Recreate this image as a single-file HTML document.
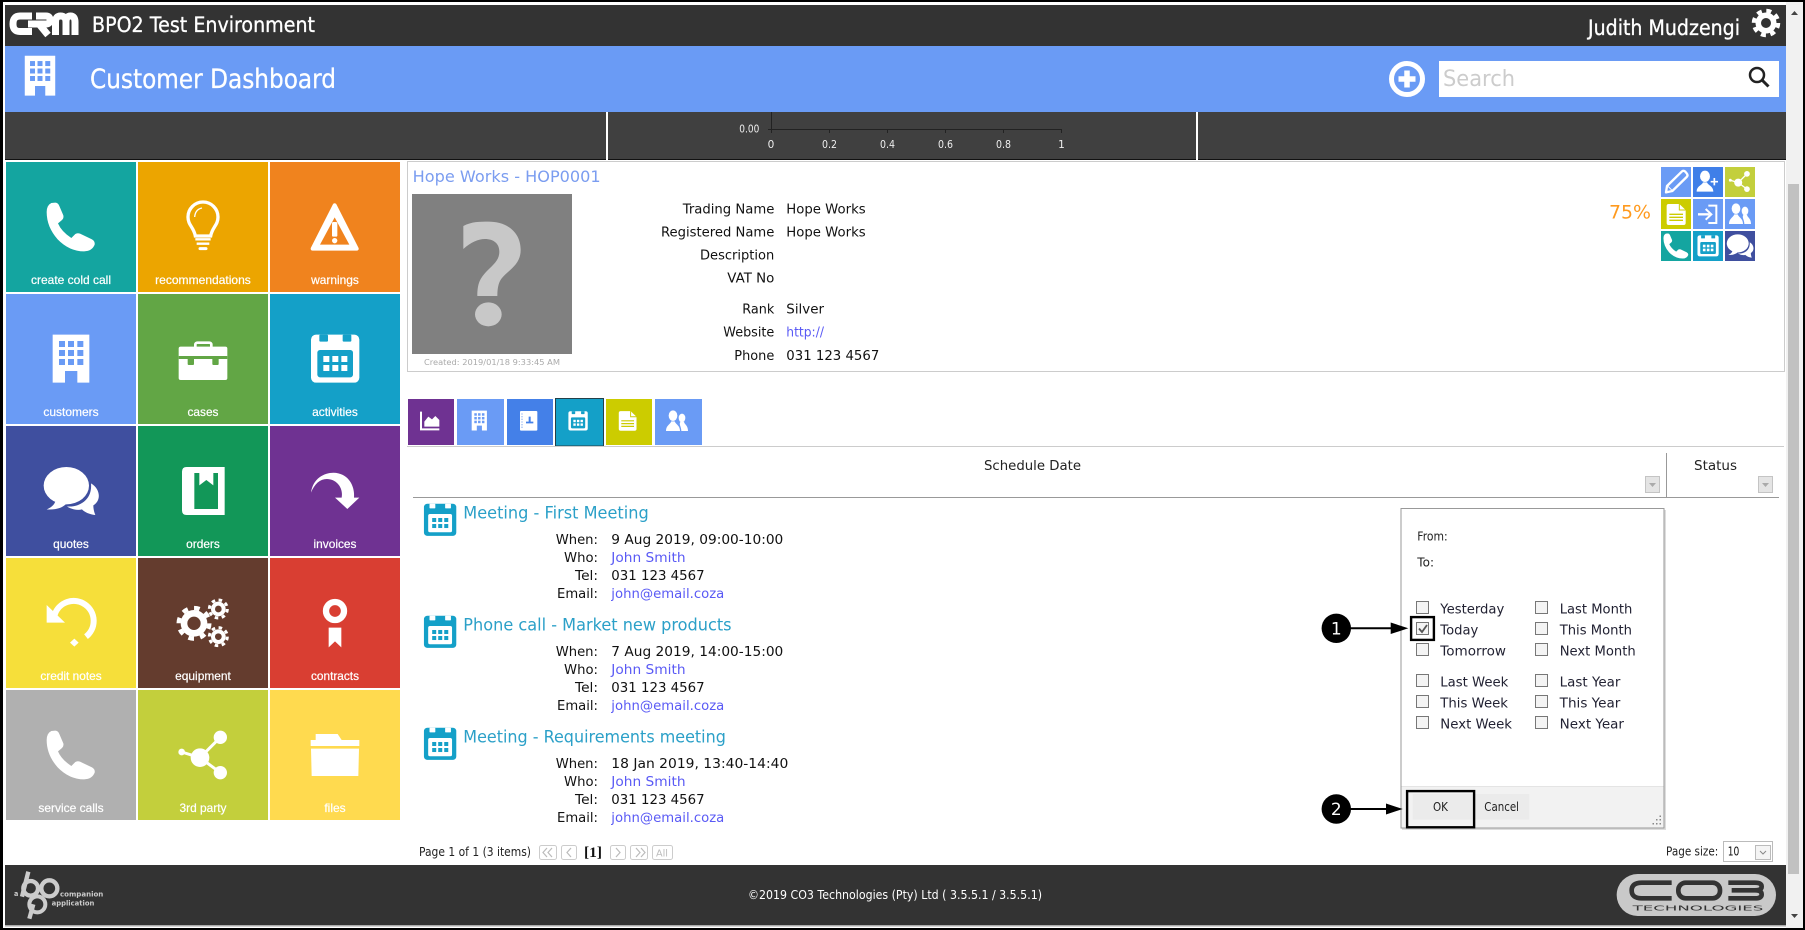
<!DOCTYPE html>
<html>
<head>
<meta charset="utf-8">
<title>Customer Dashboard</title>
<style>
html,body{margin:0;padding:0;background:#fff;width:1805px;height:930px;overflow:hidden}
svg{display:block}
text{font-family:"DejaVu Sans","Liberation Sans",sans-serif}
.a{font-family:"Liberation Sans",sans-serif;font-size:12px;fill:#fff;text-anchor:middle;stroke:#fff;stroke-width:.2}
.l{font-size:13.3px;fill:#111}
.k{font-size:13.3px;fill:#5a5af5}
.h{font-size:16.5px;fill:#2ba0c8}
.p{font-size:13.3px;fill:#223}
.s{font-size:12px;fill:#222}
.b{stroke:#fff;stroke-width:.3}
</style>
</head>
<body>
<svg xmlns="http://www.w3.org/2000/svg" width="1805" height="930" viewBox="0 0 1805 930">
<defs>
<symbol id="phone" viewBox="0 0 390 390"><path fill="#fff" d="M136 123L148 122Q156 122 160 132L172 160Q174 168 168 174L156 184Q166 208 196 228L208 216Q214 212 222 215L258 232Q268 238 266 248Q258 268 234 268Q190 268 155 232Q122 195 122 150Q122 130 136 123Z"/></symbol>
<symbol id="bulb" viewBox="0 0 390 390"><path fill="none" stroke="#fff" stroke-width="10" d="M172 222C167 195 150 190 150 165A45 45 0 0 1 240 165C240 190 223 195 218 222Z"/><path fill="none" stroke="#fff" stroke-width="4" d="M170 165Q172 142 192 138"/><path stroke="#fff" stroke-width="7" d="M172 232H218M176 245H214"/><path stroke="#fff" stroke-width="9" stroke-linecap="round" d="M186 260H204"/></symbol>
<symbol id="warn" viewBox="0 0 390 390"><path fill="#fff" stroke="#fff" stroke-width="12" stroke-linejoin="round" d="M194 130L260 260H128Z"/><path fill="currentColor" d="M194 166L238 248H150Z"/><rect x="186" y="180" width="16" height="44" rx="4" fill="#fff"/><circle cx="194" cy="236" r="8" fill="#fff"/></symbol>
<symbol id="bldg" viewBox="0 0 390 390"><path fill="#fff" d="M140 122H250V266H214V231H177V266H140Z"/><g fill="currentColor"><rect x="159" y="141" width="18" height="18"/><rect x="186" y="141" width="18" height="18"/><rect x="214" y="141" width="18" height="18"/><rect x="159" y="168" width="18" height="18"/><rect x="186" y="168" width="18" height="18"/><rect x="214" y="168" width="18" height="18"/><rect x="159" y="195" width="18" height="18"/><rect x="186" y="195" width="18" height="18"/><rect x="214" y="195" width="18" height="18"/></g></symbol>
<symbol id="case" viewBox="0 0 390 390"><rect x="122" y="158" width="146" height="100" rx="6" fill="#fff"/><rect x="172" y="146" width="48" height="20" rx="6" fill="none" stroke="#fff" stroke-width="8"/><rect x="122" y="186" width="146" height="9" fill="currentColor"/><rect x="149" y="186" width="19" height="27" rx="3" fill="currentColor"/><rect x="223" y="186" width="19" height="27" rx="3" fill="currentColor"/></symbol>
<symbol id="cal" viewBox="0 0 390 390"><rect x="123" y="122" width="145" height="144" rx="15" style="fill:var(--f,#fff)"/><rect x="148" y="122" width="26" height="21" rx="3" fill="currentColor"/><rect x="218" y="122" width="26" height="21" rx="3" fill="currentColor"/><rect x="142" y="168" width="107" height="82" rx="8" fill="currentColor"/><g style="fill:var(--f,#fff)"><rect x="160" y="186" width="18" height="18"/><rect x="187" y="186" width="18" height="18"/><rect x="214" y="186" width="18" height="18"/><rect x="160" y="213" width="18" height="18"/><rect x="187" y="213" width="18" height="18"/><rect x="214" y="213" width="18" height="18"/></g></symbol>
<symbol id="bubble" viewBox="0 0 390 390"><path fill="#fff" d="M255 172C285 190 285 225 262 238C262 250 265 260 268 267C250 265 235 258 228 250C215 254 195 250 183 241C215 245 260 225 255 172Z"/><ellipse cx="181" cy="179" rx="68" ry="56" fill="#fff"/><path fill="#fff" d="M150 215C150 235 135 245 122 250C150 252 170 245 180 234Z"/></symbol>
<symbol id="book" viewBox="0 0 390 390"><path fill="#fff" d="M146 123H260V267H146Q132 267 132 253V137Q132 123 146 123Z"/><path fill="currentColor" d="M169 141H184V178L205 162L226 178V141H240V249H169Z"/></symbol>
<symbol id="inv" viewBox="0 0 390 390"><path fill="#fff" d="M123 200C130 150 175 135 205 142C240 150 255 185 252 215H268L232 249L195 215H215C220 190 205 165 180 160C155 155 135 170 123 200Z"/></symbol>
<symbol id="credit" viewBox="0 0 390 390"><path fill="none" stroke="#fff" stroke-width="18" d="M146 170A60 60 0 1 1 240 236"/><path fill="#fff" d="M122 141V194H177Z"/><path fill="#fff" d="M205 242L218 254L205 266L192 254Z"/></symbol>
<symbol id="gears" viewBox="0 0 390 390"><circle cx="168" cy="196" r="40" fill="#fff"/><circle cx="168" cy="196" r="46" fill="none" stroke="#fff" stroke-width="13" stroke-dasharray="17 19.1"/><circle cx="168" cy="196" r="20" fill="currentColor"/><circle cx="241" cy="153" r="22" fill="#fff"/><circle cx="241" cy="153" r="27" fill="none" stroke="#fff" stroke-width="9" stroke-dasharray="10.6 10.6"/><circle cx="241" cy="153" r="10" fill="currentColor"/><circle cx="241" cy="236" r="22" fill="#fff"/><circle cx="241" cy="236" r="27" fill="none" stroke="#fff" stroke-width="9" stroke-dasharray="10.6 10.6"/><circle cx="241" cy="236" r="10" fill="currentColor"/></symbol>
<symbol id="rib" viewBox="0 0 390 390"><circle cx="195" cy="159" r="27" fill="none" stroke="#fff" stroke-width="19"/><path fill="#fff" d="M176 209H214V268L195 250L176 268Z"/></symbol>
<symbol id="share" viewBox="0 0 390 390"><path fill="none" stroke="#fff" stroke-width="9" d="M131 186L186 203L247 142M186 203L247 248"/><circle cx="186" cy="203" r="28" fill="#fff"/><circle cx="247" cy="142" r="20" fill="#fff"/><circle cx="247" cy="248" r="20" fill="#fff"/><circle cx="131" cy="186" r="10" fill="#fff"/></symbol>
<symbol id="folder" viewBox="0 0 390 390"><path fill="#fff" d="M137 132H203L215 150H268V168H122V150H137Z"/><path fill="#fff" d="M123 176H267L265 258H125Z"/></symbol>
<symbol id="pencil" viewBox="0 0 90 90"><path fill="none" stroke="#fff" stroke-width="7" stroke-linejoin="round" d="M15 76L18 57L62 14Q67 9 73 14L77 19Q82 25 77 30L34 72Z"/><path stroke="#fff" stroke-width="3" d="M21 58L33 70"/></symbol>
<symbol id="uplus" viewBox="0 0 90 90"><ellipse cx="36" cy="28" rx="15" ry="17" fill="#fff"/><path fill="#fff" d="M11 74C11 57 27 55 30 46H42C45 55 61 57 61 74Z"/><path stroke="#fff" stroke-width="5" d="M64 33V55M53 44H75"/></symbol>
<symbol id="doc" viewBox="0 0 90 90"><path fill="#fff" d="M23 15H55L74 33V72Q74 78 68 78H23Q17 78 17 72V21Q17 15 23 15Z"/><path fill="none" stroke="currentColor" stroke-width="3" d="M55 15V33H74"/><path stroke="currentColor" stroke-width="4" d="M25 46H66M25 55H66M25 64H66"/></symbol>
<symbol id="login" viewBox="0 0 90 90"><path fill="none" stroke="#fff" stroke-width="6" d="M46 20H70V72H46"/><path stroke="#fff" stroke-width="7" d="M15 46H50"/><path fill="none" stroke="#fff" stroke-width="6" d="M38 30L55 46L38 62"/></symbol>
<symbol id="users" viewBox="0 0 90 90"><ellipse cx="33" cy="29" rx="13" ry="16" fill="#fff"/><path fill="#fff" d="M12 75C12 58 24 56 28 46H38C42 56 54 58 54 75Z"/><ellipse cx="60" cy="36" rx="10" ry="13" fill="#fff"/><path fill="#fff" d="M58 75C58 62 50 55 55 48H66C68 56 78 58 78 75Z"/></symbol>
</defs>

<!-- frame -->
<rect width="1805" height="930" fill="#000"/>
<rect x="3" y="2" width="1800" height="926" fill="#fff"/>

<!-- header -->
<rect x="5" y="5" width="1781" height="41" fill="#333"/>
<g fill="none" stroke="#fff" stroke-width="7">
<path d="M32 16H20Q13 16 13 24Q13 31.500 20 31.500H32"/>
<path d="M28 24H46Q50 24 50 20Q50 16 46 16H36"/>
<path d="M39 24L48 35"/>
<path d="M55.500 35V22Q55.500 16 60.500 16Q66 16 66 22V35M66 22Q66 16 70.500 16Q75 16 75 22V35"/>
</g>
<text class="b" x="92" y="32" font-size="21" fill="#fff" textLength="223" lengthAdjust="spacingAndGlyphs">BPO2 Test Environment</text>
<text class="b" x="1588" y="35" font-size="21" fill="#fff" textLength="152" lengthAdjust="spacingAndGlyphs">Judith Mudzengi</text>
<circle cx="1766" cy="23" r="10.500" fill="#fff"/>
<circle cx="1766" cy="23" r="12" fill="none" stroke="#fff" stroke-width="4.500" stroke-dasharray="4.900 4.520"/>
<circle cx="1766" cy="23" r="5" fill="#333"/>

<!-- blue bar -->
<rect x="5" y="46" width="1781" height="66" fill="#6a9bf5"/>
<use href="#bldg" x="-14" y="22" width="108" height="108" color="#6a9bf5"/>
<text class="b" x="90" y="88" font-size="27" fill="#fff" textLength="246" lengthAdjust="spacingAndGlyphs">Customer Dashboard</text>
<circle cx="1407" cy="79" r="15.500" fill="none" stroke="#fff" stroke-width="5"/>
<path d="M1407 70.500V87.500M1398.500 79H1415.500" stroke="#fff" stroke-width="5.500"/>
<rect x="1439" y="61" width="340" height="36" fill="#fff"/>
<text x="1443" y="86" font-size="22" fill="#ccc" textLength="72" lengthAdjust="spacingAndGlyphs">Search</text>
<circle cx="1757" cy="75" r="7" fill="none" stroke="#222" stroke-width="2.500"/>
<path d="M1762 80L1768.500 86.500" stroke="#222" stroke-width="3"/>

<!-- chart strip -->
<rect x="5" y="112" width="1781" height="47" fill="#404040"/>
<rect x="5" y="159" width="1781" height="1" fill="#111"/>
<rect x="606" y="112" width="2" height="48" fill="#fff"/>
<rect x="1196" y="112" width="2" height="48" fill="#fff"/>
<path d="M771.500 112V133M768 129.500H1062M829.500 129.500V133M887.500 129.500V133M945.500 129.500V133M1003.500 129.500V133M1061.500 129.500V133" stroke="#222" fill="none"/>
<g font-size="10.500" fill="#eee" text-anchor="middle">
<text x="749.300" y="132.700" textLength="20" lengthAdjust="spacingAndGlyphs">0.00</text>
<text x="771" y="148">0</text><text x="829.500" y="148" textLength="15" lengthAdjust="spacingAndGlyphs">0.2</text><text x="887.500" y="148" textLength="15" lengthAdjust="spacingAndGlyphs">0.4</text><text x="945.500" y="148" textLength="15" lengthAdjust="spacingAndGlyphs">0.6</text><text x="1003.500" y="148" textLength="15" lengthAdjust="spacingAndGlyphs">0.8</text><text x="1061.500" y="148">1</text>
</g>

<!-- tiles -->
<rect x="6" y="162" width="130" height="130" fill="#14a5a0"/><use href="#phone" x="6" y="162" width="130" height="130"/>
<rect x="138" y="162" width="130" height="130" fill="#eca500"/><use href="#bulb" x="138" y="162" width="130" height="130"/>
<rect x="270" y="162" width="130" height="130" fill="#f0831e"/><use href="#warn" x="270" y="162" width="130" height="130" color="#f0831e"/>
<rect x="6" y="294" width="130" height="130" fill="#6a9bf5"/><use href="#bldg" x="6" y="294" width="130" height="130" color="#6a9bf5"/>
<rect x="138" y="294" width="130" height="130" fill="#62a645"/><use href="#case" x="138" y="294" width="130" height="130" color="#62a645"/>
<rect x="270" y="294" width="130" height="130" fill="#14a0c8"/><use href="#cal" x="270" y="294" width="130" height="130" color="#14a0c8"/>
<rect x="6" y="426" width="130" height="130" fill="#3f4f9f"/><use href="#bubble" x="6" y="426" width="130" height="130"/>
<rect x="138" y="426" width="130" height="130" fill="#129758"/><use href="#book" x="138" y="426" width="130" height="130" color="#129758"/>
<rect x="270" y="426" width="130" height="130" fill="#6f3292"/><use href="#inv" x="270" y="426" width="130" height="130"/>
<rect x="6" y="558" width="130" height="130" fill="#f6df3a"/><use href="#credit" x="6" y="558" width="130" height="130"/>
<rect x="138" y="558" width="130" height="130" fill="#643c2e"/><use href="#gears" x="138" y="558" width="130" height="130" color="#643c2e"/>
<rect x="270" y="558" width="130" height="130" fill="#d93e32"/><use href="#rib" x="270" y="558" width="130" height="130"/>
<rect x="6" y="690" width="130" height="130" fill="#b0b0b0"/><use href="#phone" x="6" y="690" width="130" height="130"/>
<rect x="138" y="690" width="130" height="130" fill="#c3cf3c"/><use href="#share" x="138" y="690" width="130" height="130"/>
<rect x="270" y="690" width="130" height="130" fill="#ffda4f"/><use href="#folder" x="270" y="690" width="130" height="130"/>
<text class="a" x="71" y="284" textLength="80" lengthAdjust="spacingAndGlyphs">create cold call</text>
<text class="a" x="203" y="284" textLength="95.700" lengthAdjust="spacingAndGlyphs">recommendations</text>
<text class="a" x="335" y="284" textLength="47.800" lengthAdjust="spacingAndGlyphs">warnings</text>
<text class="a" x="71" y="416" textLength="55.300" lengthAdjust="spacingAndGlyphs">customers</text>
<text class="a" x="203" y="416" textLength="31" lengthAdjust="spacingAndGlyphs">cases</text>
<text class="a" x="335" y="416" textLength="45.700" lengthAdjust="spacingAndGlyphs">activities</text>
<text class="a" x="71" y="548" textLength="35.700" lengthAdjust="spacingAndGlyphs">quotes</text>
<text class="a" x="203" y="548" textLength="33.700" lengthAdjust="spacingAndGlyphs">orders</text>
<text class="a" x="335" y="548" textLength="43" lengthAdjust="spacingAndGlyphs">invoices</text>
<text class="a" x="71" y="680" textLength="61.300" lengthAdjust="spacingAndGlyphs">credit notes</text>
<text class="a" x="203" y="680" textLength="55.700" lengthAdjust="spacingAndGlyphs">equipment</text>
<text class="a" x="335" y="680" textLength="48" lengthAdjust="spacingAndGlyphs">contracts</text>
<text class="a" x="71" y="812" textLength="65.300" lengthAdjust="spacingAndGlyphs">service calls</text>
<text class="a" x="203" y="812" textLength="47" lengthAdjust="spacingAndGlyphs">3rd party</text>
<text class="a" x="335" y="812" textLength="21.300" lengthAdjust="spacingAndGlyphs">files</text>

<!-- info panel -->
<rect x="407.500" y="161.500" width="1377" height="210" fill="#fff" stroke="#ccc"/>
<text x="412.700" y="182" font-size="16" fill="#7b9df0" textLength="188" lengthAdjust="spacingAndGlyphs">Hope Works - HOP0001</text>
<rect x="412" y="194" width="160" height="160" fill="#808080"/>
<g transform="translate(400,150) scale(.33333)" fill="#c8c8c8"><path d="M190 228C215 215 240 215 265 215C320 215 362 245 362 300C362 345 325 360 305 385C297 395 292 410 292 438H232C232 400 240 385 262 362C282 342 298 330 298 305C298 280 280 267 255 267C235 267 212 277 190 297Z"/><ellipse cx="265" cy="493" rx="40" ry="36"/></g>
<text x="424" y="365" font-size="8" fill="#aaa" textLength="136" lengthAdjust="spacingAndGlyphs">Created: 2019/01/18 9:33:45 AM</text>
<text class="l" x="682.700" y="213.300" textLength="91.700" lengthAdjust="spacingAndGlyphs">Trading Name</text>
<text class="l" x="661" y="236.300" textLength="113.300" lengthAdjust="spacingAndGlyphs">Registered Name</text>
<text class="l" x="700" y="259.300" textLength="74.300" lengthAdjust="spacingAndGlyphs">Description</text>
<text class="l" x="727.300" y="282.300" textLength="47" lengthAdjust="spacingAndGlyphs">VAT No</text>
<text class="l" x="742.300" y="313.300" textLength="32" lengthAdjust="spacingAndGlyphs">Rank</text>
<text class="l" x="723.300" y="336.300" textLength="51" lengthAdjust="spacingAndGlyphs">Website</text>
<text class="l" x="734.300" y="360" textLength="40" lengthAdjust="spacingAndGlyphs">Phone</text>
<text class="l" x="786.300" y="213.300" textLength="79.400" lengthAdjust="spacingAndGlyphs">Hope Works</text>
<text class="l" x="786.300" y="236.300" textLength="79.400" lengthAdjust="spacingAndGlyphs">Hope Works</text>
<text class="l" x="786.300" y="313.300" textLength="37.700" lengthAdjust="spacingAndGlyphs">Silver</text>
<text class="k" x="786.300" y="336.300" textLength="37.700" lengthAdjust="spacingAndGlyphs">http://</text>
<text class="l" x="786.300" y="360" textLength="93" lengthAdjust="spacingAndGlyphs">031 123 4567</text>
<text x="1609" y="218.700" font-size="18.500" fill="#ff9a1e" textLength="42" lengthAdjust="spacingAndGlyphs">75%</text>

<!-- action icons -->
<rect x="1661" y="167" width="30" height="30" fill="#6a9bf5"/><use href="#pencil" x="1661" y="167" width="30" height="30"/>
<rect x="1693" y="167" width="30" height="30" fill="#3f7fe8"/><use href="#uplus" x="1693" y="167" width="30" height="30"/>
<rect x="1725" y="167" width="30" height="30" fill="#c3cf3c"/><use href="#share" x="1711.500" y="153.500" width="56" height="56"/>
<rect x="1661" y="199" width="30" height="30" fill="#cccc00"/><use href="#doc" x="1661" y="199" width="30" height="30" color="#cccc00"/>
<rect x="1693" y="199" width="30" height="30" fill="#6a9bf5"/><use href="#login" x="1693" y="199" width="30" height="30"/>
<rect x="1725" y="199" width="30" height="30" fill="#6a9bf5"/><use href="#users" x="1725" y="199" width="30" height="30"/>
<rect x="1661" y="231" width="30" height="30" fill="#14a5a0"/><use href="#phone" x="1642.500" y="212.500" width="67" height="67"/>
<rect x="1693" y="231" width="30" height="30" fill="#14a0c8"/><use href="#cal" x="1679.500" y="217.500" width="57" height="57" color="#14a0c8"/>
<rect x="1725" y="231" width="30" height="30" fill="#3f4f9f"/><use href="#bubble" x="1708.500" y="214.500" width="63" height="63"/>

<!-- tabs -->
<rect x="408" y="399" width="46" height="46" fill="#6f3292"/>
<rect x="457" y="399" width="47" height="46" fill="#6a9bf5"/>
<rect x="507" y="399" width="46" height="46" fill="#4480e8"/>
<rect x="555.500" y="398.500" width="48" height="47.500" fill="#14a0c8" stroke="#23404a"/>
<rect x="606" y="399" width="46" height="46" fill="#cccc00"/>
<rect x="655" y="399" width="47" height="46" fill="#6a9bf5"/>
<rect x="407" y="446" width="1377" height="1" fill="#ccc"/>
<g transform="translate(400,150) scale(.33333)">
<path d="M63 785V838H118" fill="none" stroke="#fff" stroke-width="6"/>
<path d="M73 830V815L85 800L96 808L106 798L118 810V830Z" fill="#fff"/>
<rect x="360" y="783" width="52" height="59" rx="3" fill="#fff"/>
<path d="M366 790V836" stroke="#4480e8" stroke-width="2" stroke-dasharray="4 4"/>
<path d="M386 800H392V815H400V820H378V815H386Z" fill="#4480e8"/>
</g>
<use href="#bldg" x="452.300" y="393.700" width="54" height="54" color="#6a9bf5"/>
<use href="#cal" x="552" y="395" width="52" height="52" color="#14a0c8"/>
<use href="#doc" x="613.500" y="406.500" width="28" height="28" color="#cccc00"/>
<use href="#users" x="662" y="406" width="30" height="30"/>

<!-- grid header -->
<text x="984" y="470" font-size="13" fill="#222" textLength="97" lengthAdjust="spacingAndGlyphs">Schedule Date</text>
<text x="1694" y="470" font-size="13" fill="#222" textLength="43" lengthAdjust="spacingAndGlyphs">Status</text>
<rect x="1645.500" y="476.500" width="14" height="16" fill="#e4e4e4" stroke="#c4c4c4"/><path d="M1649 483H1656L1652.500 487Z" fill="#aaa"/>
<rect x="1758.500" y="476.500" width="14" height="16" fill="#e4e4e4" stroke="#c4c4c4"/><path d="M1762 483H1769L1765.500 487Z" fill="#aaa"/>
<rect x="1666" y="453" width="1" height="44" fill="#999"/>
<rect x="413" y="497" width="1366" height="1" fill="#999"/>

<!-- list item 1 -->
<use href="#cal" x="396.500" y="476.500" width="87" height="87" color="#fff" style="--f:#14a0c8"/>
<text class="h" x="463.300" y="518.300" textLength="185.400" lengthAdjust="spacingAndGlyphs">Meeting - First Meeting</text>
<text class="l" x="555.700" y="544" textLength="42.300" lengthAdjust="spacingAndGlyphs">When:</text>
<text class="l" x="611.300" y="544" textLength="172" lengthAdjust="spacingAndGlyphs">9 Aug 2019, 09:00-10:00</text>
<text class="l" x="564" y="562" textLength="34" lengthAdjust="spacingAndGlyphs">Who:</text>
<text class="k" x="611.300" y="562" textLength="74.300" lengthAdjust="spacingAndGlyphs">John Smith</text>
<text class="l" x="575" y="580" textLength="23" lengthAdjust="spacingAndGlyphs">Tel:</text>
<text class="l" x="611.300" y="580" textLength="93.300" lengthAdjust="spacingAndGlyphs">031 123 4567</text>
<text class="l" x="557" y="598" textLength="41" lengthAdjust="spacingAndGlyphs">Email:</text>
<text class="k" x="611.300" y="598" textLength="113" lengthAdjust="spacingAndGlyphs">john@email.coza</text>

<!-- list item 2 -->
<use href="#cal" x="396.500" y="588.500" width="87" height="87" color="#fff" style="--f:#14a0c8"/>
<text class="h" x="463.300" y="630.300" textLength="268.300" lengthAdjust="spacingAndGlyphs">Phone call - Market new products</text>
<text class="l" x="555.700" y="656" textLength="42.300" lengthAdjust="spacingAndGlyphs">When:</text>
<text class="l" x="611.300" y="656" textLength="172" lengthAdjust="spacingAndGlyphs">7 Aug 2019, 14:00-15:00</text>
<text class="l" x="564" y="674" textLength="34" lengthAdjust="spacingAndGlyphs">Who:</text>
<text class="k" x="611.300" y="674" textLength="74.300" lengthAdjust="spacingAndGlyphs">John Smith</text>
<text class="l" x="575" y="692" textLength="23" lengthAdjust="spacingAndGlyphs">Tel:</text>
<text class="l" x="611.300" y="692" textLength="93.300" lengthAdjust="spacingAndGlyphs">031 123 4567</text>
<text class="l" x="557" y="710" textLength="41" lengthAdjust="spacingAndGlyphs">Email:</text>
<text class="k" x="611.300" y="710" textLength="113" lengthAdjust="spacingAndGlyphs">john@email.coza</text>

<!-- list item 3 -->
<use href="#cal" x="396.500" y="700.500" width="87" height="87" color="#fff" style="--f:#14a0c8"/>
<text class="h" x="463.300" y="742.300" textLength="262.600" lengthAdjust="spacingAndGlyphs">Meeting - Requirements meeting</text>
<text class="l" x="555.700" y="768" textLength="42.300" lengthAdjust="spacingAndGlyphs">When:</text>
<text class="l" x="611.300" y="768" textLength="177" lengthAdjust="spacingAndGlyphs">18 Jan 2019, 13:40-14:40</text>
<text class="l" x="564" y="786" textLength="34" lengthAdjust="spacingAndGlyphs">Who:</text>
<text class="k" x="611.300" y="786" textLength="74.300" lengthAdjust="spacingAndGlyphs">John Smith</text>
<text class="l" x="575" y="804" textLength="23" lengthAdjust="spacingAndGlyphs">Tel:</text>
<text class="l" x="611.300" y="804" textLength="93.300" lengthAdjust="spacingAndGlyphs">031 123 4567</text>
<text class="l" x="557" y="822" textLength="41" lengthAdjust="spacingAndGlyphs">Email:</text>
<text class="k" x="611.300" y="822" textLength="113" lengthAdjust="spacingAndGlyphs">john@email.coza</text>

<!-- pager -->
<text class="s" x="419" y="856" textLength="112" lengthAdjust="spacingAndGlyphs">Page 1 of 1 (3 items)</text>
<g fill="#fff" stroke="#ccc">
<rect x="539.500" y="845.500" width="17" height="14" rx="2"/><rect x="561.500" y="845.500" width="15" height="14" rx="2"/>
<rect x="610.500" y="845.500" width="15" height="14" rx="2"/><rect x="630.500" y="845.500" width="17" height="14" rx="2"/>
<rect x="652.500" y="845.500" width="20" height="14" rx="2"/>
</g>
<g fill="none" stroke="#bbb" stroke-width="1.200">
<path d="M547 848L543 852.500L547 857M552 848L548 852.500L552 857"/>
<path d="M571 848L567 852.500L571 857"/>
<path d="M616 848L620 852.500L616 857"/>
<path d="M636 848L640 852.500L636 857M641 848L645 852.500L641 857"/>
</g>
<text x="656" y="856.500" font-size="10" fill="#bbb" textLength="12" lengthAdjust="spacingAndGlyphs">All</text>
<text x="584" y="857" font-size="15" font-weight="bold" fill="#111" style="font-family:'Liberation Serif',serif" textLength="18" lengthAdjust="spacingAndGlyphs">[1]</text>

<!-- page size -->
<text class="s" x="1666" y="855.300" textLength="52.300" lengthAdjust="spacingAndGlyphs">Page size:</text>
<rect x="1723.500" y="841.500" width="49" height="20" fill="#fff" stroke="#bbb"/>
<text x="1727.700" y="855.300" font-size="12" fill="#111" textLength="11.600" lengthAdjust="spacingAndGlyphs">10</text>
<rect x="1755.500" y="845.500" width="15" height="14" fill="#f4f4f4" stroke="#bbb"/>
<path d="M1760 851L1763 854L1766 851" fill="none" stroke="#888"/>

<!-- footer -->
<rect x="5" y="865" width="1781" height="60" fill="#333"/>
<rect x="5" y="925" width="1781" height="1.500" fill="#aaa"/>
<text x="748" y="899" font-size="12" fill="#fff" textLength="294" lengthAdjust="spacingAndGlyphs">©2019 CO3 Technologies (Pty) Ltd ( 3.5.5.1 / 3.5.5.1)</text>
<g transform="translate(0,560) scale(.33333)">
<g fill="none" stroke="#ccc">
<circle cx="92" cy="985" r="22" stroke-width="13"/>
<circle cx="148" cy="985" r="24" stroke-width="13"/>
<circle cx="112" cy="1033" r="24" stroke-width="12"/>
<path d="M85 935L66 1010" stroke-width="13"/>
<path d="M100 1033L88 1076" stroke-width="13"/>
</g>
<g fill="#ccc" font-size="20" font-weight="bold">
<text x="42" y="1008" textLength="13" lengthAdjust="spacingAndGlyphs">a</text>
<text x="180" y="1010" textLength="130" lengthAdjust="spacingAndGlyphs">companion</text>
<text x="155" y="1037" textLength="128" lengthAdjust="spacingAndGlyphs">application</text>
</g>
</g>
<g transform="translate(1300,730) scale(.33333)">
<rect x="950" y="432" width="478" height="126" rx="63" fill="#c9c9c9"/>
<g fill="none" stroke="#333" stroke-width="14">
<path d="M1115 458H1025Q995 458 995 481Q995 505 1025 505H1115"/>
<rect x="1135" y="458" width="125" height="47" rx="22"/>
<path d="M1285 458H1365Q1385 458 1385 470Q1385 481 1365 481H1295M1365 481Q1385 481 1385 493Q1385 505 1365 505H1285"/>
</g>
<text x="998" y="541" font-size="20" fill="#333" textLength="392" lengthAdjust="spacingAndGlyphs">TECHNOLOGIES</text>
</g>

<!-- scrollbar -->
<rect x="1786" y="2" width="17" height="926" fill="#f1f1f1"/>
<rect x="1788" y="184" width="11" height="690" fill="#c1c1c1"/>
<path d="M1794.500 11L1798 15H1791Z" fill="#444"/>
<path d="M1791 914H1798L1794.500 918Z" fill="#444"/>

<!-- popup -->
<rect x="1402" y="510" width="264" height="320" fill="#ddd"/>
<rect x="1401" y="508.500" width="263" height="319.500" fill="#fff" stroke="#999"/>
<rect x="1401.500" y="786" width="262" height="41.500" fill="#f2f2f2"/>
<rect x="1401.500" y="786" width="262" height="1" fill="#e4e4e4"/>
<text class="s" x="1417.300" y="540.700" textLength="30.400" lengthAdjust="spacingAndGlyphs">From:</text>
<text class="s" x="1417.300" y="566.700" textLength="16.700" lengthAdjust="spacingAndGlyphs">To:</text>
<g fill="#f4f4f4" stroke="#777">
<rect x="1416.500" y="601.500" width="12" height="12"/><rect x="1416.500" y="622.500" width="12" height="12"/><rect x="1416.500" y="643.500" width="12" height="12"/>
<rect x="1416.500" y="674.500" width="12" height="12"/><rect x="1416.500" y="695.500" width="12" height="12"/><rect x="1416.500" y="716.500" width="12" height="12"/>
<rect x="1535.500" y="601.500" width="12" height="12"/><rect x="1535.500" y="622.500" width="12" height="12"/><rect x="1535.500" y="643.500" width="12" height="12"/>
<rect x="1535.500" y="674.500" width="12" height="12"/><rect x="1535.500" y="695.500" width="12" height="12"/><rect x="1535.500" y="716.500" width="12" height="12"/>
</g>
<path d="M1419 628.500L1422 632L1427 625" fill="none" stroke="#555" stroke-width="1.800"/>
<text class="p" x="1440.300" y="613.300" textLength="64" lengthAdjust="spacingAndGlyphs">Yesterday</text>
<text class="p" x="1440.300" y="634.300" textLength="38" lengthAdjust="spacingAndGlyphs">Today</text>
<text class="p" x="1440.300" y="655.300" textLength="65.700" lengthAdjust="spacingAndGlyphs">Tomorrow</text>
<text class="p" x="1440.300" y="686.300" textLength="68" lengthAdjust="spacingAndGlyphs">Last Week</text>
<text class="p" x="1440.300" y="707.300" textLength="67.700" lengthAdjust="spacingAndGlyphs">This Week</text>
<text class="p" x="1440.300" y="728.300" textLength="71.700" lengthAdjust="spacingAndGlyphs">Next Week</text>
<text class="p" x="1559.700" y="613.300" textLength="72.700" lengthAdjust="spacingAndGlyphs">Last Month</text>
<text class="p" x="1559.700" y="634.300" textLength="72.300" lengthAdjust="spacingAndGlyphs">This Month</text>
<text class="p" x="1559.700" y="655.300" textLength="76" lengthAdjust="spacingAndGlyphs">Next Month</text>
<text class="p" x="1559.700" y="686.300" textLength="60.700" lengthAdjust="spacingAndGlyphs">Last Year</text>
<text class="p" x="1559.700" y="707.300" textLength="60.700" lengthAdjust="spacingAndGlyphs">This Year</text>
<text class="p" x="1559.700" y="728.300" textLength="64.300" lengthAdjust="spacingAndGlyphs">Next Year</text>
<rect x="1412.700" y="794" width="62" height="25.500" fill="#ebebeb"/>
<rect x="1475" y="794" width="54.300" height="25.500" fill="#ebebeb"/>
<text class="s" x="1433" y="811" textLength="15" lengthAdjust="spacingAndGlyphs">OK</text>
<text class="s" x="1484.300" y="811" textLength="34.700" lengthAdjust="spacingAndGlyphs">Cancel</text>
<g fill="#888"><rect x="1659.500" y="815.500" width="1.500" height="1.500"/><rect x="1656" y="819" width="1.500" height="1.500"/><rect x="1659.500" y="819" width="1.500" height="1.500"/><rect x="1652.500" y="823" width="1.500" height="1.500"/><rect x="1656" y="823" width="1.500" height="1.500"/><rect x="1659.500" y="823" width="1.500" height="1.500"/></g>

<!-- callouts -->
<rect x="1411.100" y="617.100" width="22.800" height="22.800" fill="none" stroke="#000" stroke-width="2.400"/>
<circle cx="1336.300" cy="628.300" r="14.700" fill="#000"/>
<text x="1336.300" y="634.500" font-size="17" fill="#fff" text-anchor="middle">1</text>
<path d="M1345 628.300H1392" stroke="#000" stroke-width="2"/>
<path d="M1390.700 622.500L1408.300 628.300L1390.700 634Z" fill="#000"/>
<rect x="1407.100" y="791.100" width="67" height="36.200" fill="none" stroke="#000" stroke-width="2.400"/>
<circle cx="1336.300" cy="809" r="14.700" fill="#000"/>
<text x="1336.300" y="815.200" font-size="17" fill="#fff" text-anchor="middle">2</text>
<path d="M1345 809H1387" stroke="#000" stroke-width="2"/>
<path d="M1386 803.500L1402.700 809L1386 814.500Z" fill="#000"/>
</svg>
</body>
</html>
